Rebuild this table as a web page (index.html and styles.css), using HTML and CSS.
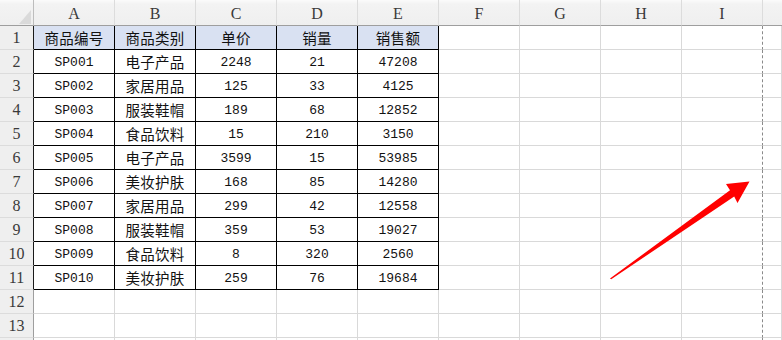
FILE: index.html
```html
<!DOCTYPE html>
<html lang="zh">
<head>
<meta charset="utf-8">
<link rel="stylesheet" href="styles.css">
</head>
<body>
<div class="sheet">
  <div class="grid">
    <div class="corner"><span class="tri"></span></div>
    <div class="ch">A</div><div class="ch">B</div><div class="ch">C</div><div class="ch">D</div><div class="ch">E</div><div class="ch">F</div><div class="ch">G</div><div class="ch">H</div><div class="ch pbh">I</div><div class="ch last"></div>

    <div class="rh in">1</div>
    <div class="c t h zh">商品编号</div><div class="c t h zh">商品类别</div><div class="c t h zh">单价</div><div class="c t h zh">销量</div><div class="c t h zh">销售额</div>
    <div class="c"></div><div class="c"></div><div class="c"></div><div class="c pb"></div><div class="c"></div>

    <div class="rh in">2</div>
    <div class="c t">SP001</div><div class="c t zh">电子产品</div><div class="c t">2248</div><div class="c t">21</div><div class="c t">47208</div>
    <div class="c"></div><div class="c"></div><div class="c"></div><div class="c pb"></div><div class="c"></div>

    <div class="rh in">3</div>
    <div class="c t">SP002</div><div class="c t zh">家居用品</div><div class="c t">125</div><div class="c t">33</div><div class="c t">4125</div>
    <div class="c"></div><div class="c"></div><div class="c"></div><div class="c pb"></div><div class="c"></div>

    <div class="rh in">4</div>
    <div class="c t">SP003</div><div class="c t zh">服装鞋帽</div><div class="c t">189</div><div class="c t">68</div><div class="c t">12852</div>
    <div class="c"></div><div class="c"></div><div class="c"></div><div class="c pb"></div><div class="c"></div>

    <div class="rh in">5</div>
    <div class="c t">SP004</div><div class="c t zh">食品饮料</div><div class="c t">15</div><div class="c t">210</div><div class="c t">3150</div>
    <div class="c"></div><div class="c"></div><div class="c"></div><div class="c pb"></div><div class="c"></div>

    <div class="rh in">6</div>
    <div class="c t">SP005</div><div class="c t zh">电子产品</div><div class="c t">3599</div><div class="c t">15</div><div class="c t">53985</div>
    <div class="c"></div><div class="c"></div><div class="c"></div><div class="c pb"></div><div class="c"></div>

    <div class="rh in">7</div>
    <div class="c t">SP006</div><div class="c t zh">美妆护肤</div><div class="c t">168</div><div class="c t">85</div><div class="c t">14280</div>
    <div class="c"></div><div class="c"></div><div class="c"></div><div class="c pb"></div><div class="c"></div>

    <div class="rh in">8</div>
    <div class="c t">SP007</div><div class="c t zh">家居用品</div><div class="c t">299</div><div class="c t">42</div><div class="c t">12558</div>
    <div class="c"></div><div class="c"></div><div class="c"></div><div class="c pb"></div><div class="c"></div>

    <div class="rh in">9</div>
    <div class="c t">SP008</div><div class="c t zh">服装鞋帽</div><div class="c t">359</div><div class="c t">53</div><div class="c t">19027</div>
    <div class="c"></div><div class="c"></div><div class="c"></div><div class="c pb"></div><div class="c"></div>

    <div class="rh in">10</div>
    <div class="c t">SP009</div><div class="c t zh">食品饮料</div><div class="c t">8</div><div class="c t">320</div><div class="c t">2560</div>
    <div class="c"></div><div class="c"></div><div class="c"></div><div class="c pb"></div><div class="c"></div>

    <div class="rh in">11</div>
    <div class="c t">SP010</div><div class="c t zh">美妆护肤</div><div class="c t">259</div><div class="c t">76</div><div class="c t">19684</div>
    <div class="c"></div><div class="c"></div><div class="c"></div><div class="c pb"></div><div class="c"></div>

    <div class="rh">12</div>
    <div class="c"></div><div class="c"></div><div class="c"></div><div class="c"></div><div class="c"></div>
    <div class="c"></div><div class="c"></div><div class="c"></div><div class="c pb"></div><div class="c"></div>

    <div class="rh">13</div>
    <div class="c"></div><div class="c"></div><div class="c"></div><div class="c"></div><div class="c"></div>
    <div class="c"></div><div class="c"></div><div class="c"></div><div class="c pb"></div><div class="c"></div>

    <div class="rh"></div>
    <div class="c"></div><div class="c"></div><div class="c"></div><div class="c"></div><div class="c"></div>
    <div class="c"></div><div class="c"></div><div class="c"></div><div class="c pb"></div><div class="c"></div>
  </div>

  <svg class="arrow" width="782" height="340" viewBox="0 0 782 340" aria-hidden="true">
    <polygon points="610,278.5 730,190.3 726,184 749.5,181.5 737.5,203 734.2,196.6 611.2,279.2" fill="#ff0000"/>
  </svg>
</div>
</body>
</html>
```

FILE: styles.css
```css
html, body {
  margin: 0;
  padding: 0;
  background: #ffffff;
}

.sheet {
  position: relative;
  width: 782px;
  height: 340px;
  overflow: hidden;
}

.grid {
  display: grid;
  grid-template-columns: 34px repeat(9, 81px) 1fr;
  grid-template-rows: 26px repeat(14, 24px);
}

.corner {
  position: relative;
  box-sizing: border-box;
  background: linear-gradient(#fbfbfb 0, #f3f3f3 4px, #efefef 100%);
  border-right: 1px solid #bdbdbd;
  border-bottom: 1px solid #9e9e9e;
}

.tri {
  position: absolute;
  right: 2px;
  bottom: 1px;
  width: 0;
  height: 0;
  border-left: 12px solid transparent;
  border-bottom: 14px solid #dadada;
}

.ch {
  box-sizing: border-box;
  background: linear-gradient(#fbfbfb 0, #f3f3f3 4px, #efefef 100%);
  border-right: 1px solid #dcdcdc;
  border-bottom: 1px solid #9e9e9e;
  font-family: "Liberation Serif", "DejaVu Serif", serif;
  font-size: 16px;
  color: #3a3a3a;
  display: flex;
  align-items: center;
  justify-content: center;
  padding-top: 3px;
}

.ch.last {
  border-right: none;
}

.rh {
  box-sizing: border-box;
  background: #efefef;
  border-right: 1px solid #9e9e9e;
  border-bottom: 1px solid #dcdcdc;
  font-family: "Liberation Serif", "DejaVu Serif", serif;
  font-size: 16px;
  color: #3a3a3a;
  display: flex;
  align-items: center;
  justify-content: center;
  padding-top: 1px;
}

.rh.in {
  border-right-color: #1a1a1a;
}

.c {
  box-sizing: border-box;
  border-right: 1px solid #d9d9d9;
  border-bottom: 1px solid #d9d9d9;
  font-family: "Liberation Mono", "DejaVu Sans Mono", monospace;
  font-size: 13px;
  color: #111111;
  display: flex;
  align-items: center;
  justify-content: center;
  padding-top: 1px;
}

.c.t {
  border-right-color: #000000;
  border-bottom-color: #000000;
}

.c.h {
  background: #d9e1f2;
}

.zh {
  font-family: "Noto Sans CJK SC", "Noto Sans CJK JP", sans-serif;
  font-size: 14.5px;
  letter-spacing: 0.3px;
  padding-top: 0;
}

.c.pb {
  border-right: 1px dashed #8a8a8a;
}

.arrow {
  position: absolute;
  left: 0;
  top: 0;
  pointer-events: none;
}
```
